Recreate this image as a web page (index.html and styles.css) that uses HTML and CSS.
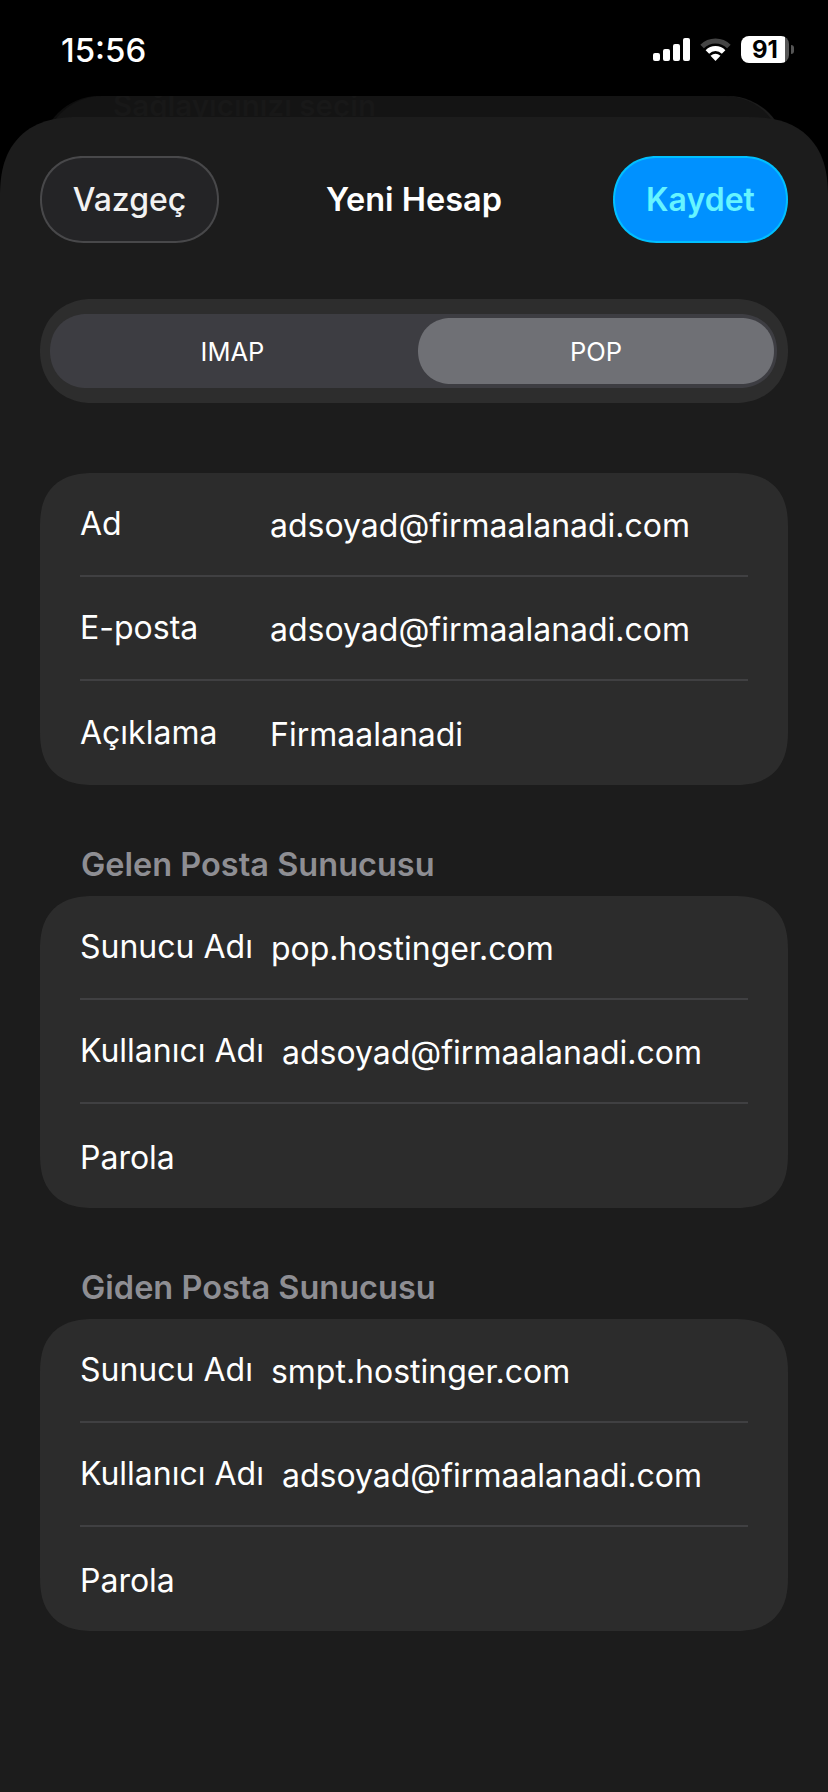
FILE: index.html
```html
<!DOCTYPE html>
<html lang="tr">
<head>
    <meta charset="UTF-8">
    <title>Yeni Hesap</title>
    <link rel="stylesheet" href="styles.css">
</head>
<body>
    <div class="status-bar">
        <span class="time">15:56</span>
        <div class="status-icons">
            <svg class="signal" width="37" height="23" viewBox="0 0 37 23">
                <rect x="0" y="15" width="7" height="8" rx="2" fill="#fff"/>
                <rect x="10" y="11" width="7" height="12" rx="2" fill="#fff"/>
                <rect x="20" y="6" width="7" height="17" rx="2" fill="#fff"/>
                <rect x="30" y="0" width="7" height="23" rx="2" fill="#fff"/>
            </svg>
            <svg class="wifi" width="33" height="23" viewBox="0 0 33 23">
                <path d="M3.1 8.6A19 19 0 0 1 29.9 8.6" fill="none" stroke="#444" stroke-width="5"/>
                <path d="M8.4 13.9A11.5 11.5 0 0 1 24.6 13.9" fill="none" stroke="#fff" stroke-width="5"/>
                <path d="M16.5 23L11.5 17.7Q16.5 13.7 21.5 17.7Z" fill="#fff"/>
            </svg>
            <div class="battery">
                <div class="battery-body">91</div>
                <div class="battery-nub"></div>
            </div>
        </div>
    </div>

    <div class="back-card">
        <span class="back-title">Sağlayıcınızı seçin</span>
    </div>

    <div class="sheet">
        <div class="nav">
            <button class="btn btn-cancel">Vazgeç</button>
            <h1 class="nav-title">Yeni Hesap</h1>
            <button class="btn btn-save">Kaydet</button>
        </div>

        <div class="segment">
            <div class="segment-track">
                <div class="segment-item">IMAP</div>
                <div class="segment-item active">POP</div>
            </div>
        </div>

        <div class="card card-first">
            <div class="row"><span class="label">Ad</span><span class="value">adsoyad@firmaalanadi.com</span></div>
            <div class="row"><span class="label">E-posta</span><span class="value">adsoyad@firmaalanadi.com</span></div>
            <div class="row"><span class="label">Açıklama</span><span class="value">Firmaalanadi</span></div>
        </div>

        <h2 class="section-title">Gelen Posta Sunucusu</h2>
        <div class="card">
            <div class="row"><span class="label">Sunucu Adı</span><span class="value">pop.hostinger.com</span></div>
            <div class="row"><span class="label">Kullanıcı Adı</span><span class="value">adsoyad@firmaalanadi.com</span></div>
            <div class="row"><span class="label">Parola</span></div>
        </div>

        <h2 class="section-title">Giden Posta Sunucusu</h2>
        <div class="card">
            <div class="row"><span class="label">Sunucu Adı</span><span class="value">smpt.hostinger.com</span></div>
            <div class="row"><span class="label">Kullanıcı Adı</span><span class="value">adsoyad@firmaalanadi.com</span></div>
            <div class="row"><span class="label">Parola</span></div>
        </div>
    </div>
</body>
</html>
```

FILE: styles.css
```css
* {
    box-sizing: border-box;
}

html, body {
    margin: 0;
    padding: 0;
}

body {
    width: 828px;
    height: 1792px;
    overflow: hidden;
    background: #000;
    color: #fff;
    font-family: Inter, "Noto Sans", sans-serif;
}

/* Barra de estado */
.status-bar {
    height: 96px;
    padding: 36px 34px 0 61px;
    display: flex;
    justify-content: space-between;
    align-items: flex-start;
}

.time {
    margin-top: 1px;
    font-size: 33px;
    line-height: 27px;
    font-weight: 500;
}

.status-icons {
    display: flex;
    align-items: center;
    height: 27px;
}

.signal {
    margin-right: 9px;
}

.wifi {
    margin-right: 9px;
}

.battery {
    display: flex;
    align-items: center;
    gap: 2px;
}

.battery-body {
    width: 48px;
    height: 27px;
    border-radius: 8px;
    background: linear-gradient(to right, #fff 91%, #555 91%);
    color: #000;
    font-size: 24px;
    font-weight: 700;
    line-height: 27px;
    text-align: center;
}

.battery-nub {
    width: 3px;
    height: 9px;
    border-radius: 0 3px 3px 0;
    background: #555;
}

/* Tarjeta de atrás */
.back-card {
    height: 90px;
    margin: 0 45px -69px 44px;
    padding-left: 69px;
    overflow: hidden;
    background: #141414;
    border-radius: 58px 58px 0 0;
    box-shadow: -3px 0 0 #0e0e0e, 3px 0 0 #1c1c1c;
}

.back-title {
    display: block;
    margin-top: -8px;
    font-size: 29.5px;
    line-height: 34px;
    font-weight: 600;
    color: #181818;
}

/* Hoja principal */
.sheet {
    position: relative;
    height: 1675px;
    padding: 39px 40px 0;
    background: #1c1c1c;
    border-radius: 80px 80px 0 0;
    corner-shape: superellipse(1.3);
}

.nav {
    display: grid;
    grid-template-columns: 1fr auto 1fr;
    align-items: center;
    height: 87px;
}

.nav-title {
    margin: 0;
    font-size: 32.5px;
    font-weight: 600;
}

.btn {
    height: 87px;
    padding-top: 1px;
    border-radius: 44px;
    font-family: inherit;
    font-size: 32px;
    font-weight: 500;
    corner-shape: superellipse(1.08);
}

.btn-cancel {
    justify-self: start;
    width: 179px;
    background: #242426;
    border: 2px solid #48484a;
    color: #f2f2f2;
}

.btn-save {
    justify-self: end;
    width: 175px;
    background: #0091ff;
    border: 2px solid #00c0ff;
    color: #66f4ff;
    font-weight: 600;
}

/* Selector IMAP / POP */
.segment {
    height: 104px;
    margin-top: 56px;
    padding: 15px 11px 15px 10px;
    background: #2d2d2d;
    border-radius: 52px;
    corner-shape: superellipse(1.08);
}

.segment-track {
    display: flex;
    height: 74px;
    padding: 4px 3px 4px 0;
    background: #3d3d42;
    border-radius: 37px;
    corner-shape: superellipse(1.08);
}

.segment-item {
    width: 368px;
    padding-right: 3px;
    display: flex;
    align-items: center;
    justify-content: center;
    font-size: 25.5px;
}

.segment-item.active {
    width: 356px;
    padding-right: 0;
    background: #6f7075;
    border-radius: 33px;
    corner-shape: superellipse(1.08);
}

/* Tarjetas de campos */
.card {
    padding: 0 40px;
    background: #2c2c2c;
    border-radius: 54px;
    corner-shape: superellipse(1.3);
}

.card-first {
    margin-top: 70px;
}

.row {
    display: flex;
    align-items: center;
    height: 104px;
    padding-top: 2px;
    border-bottom: 2px solid #404042;
    font-size: 32px;
}

.row:last-child {
    border-bottom: none;
}

.label {
    min-width: 172px;
    margin-right: 18px;
    margin-bottom: 4px;
}

.label:last-child {
    margin-bottom: 0;
}

.section-title {
    margin: 62px 0 13px;
    padding-left: 41px;
    font-size: 32.5px;
    line-height: 36px;
    font-weight: 600;
    color: #8e8e93;
}
```
